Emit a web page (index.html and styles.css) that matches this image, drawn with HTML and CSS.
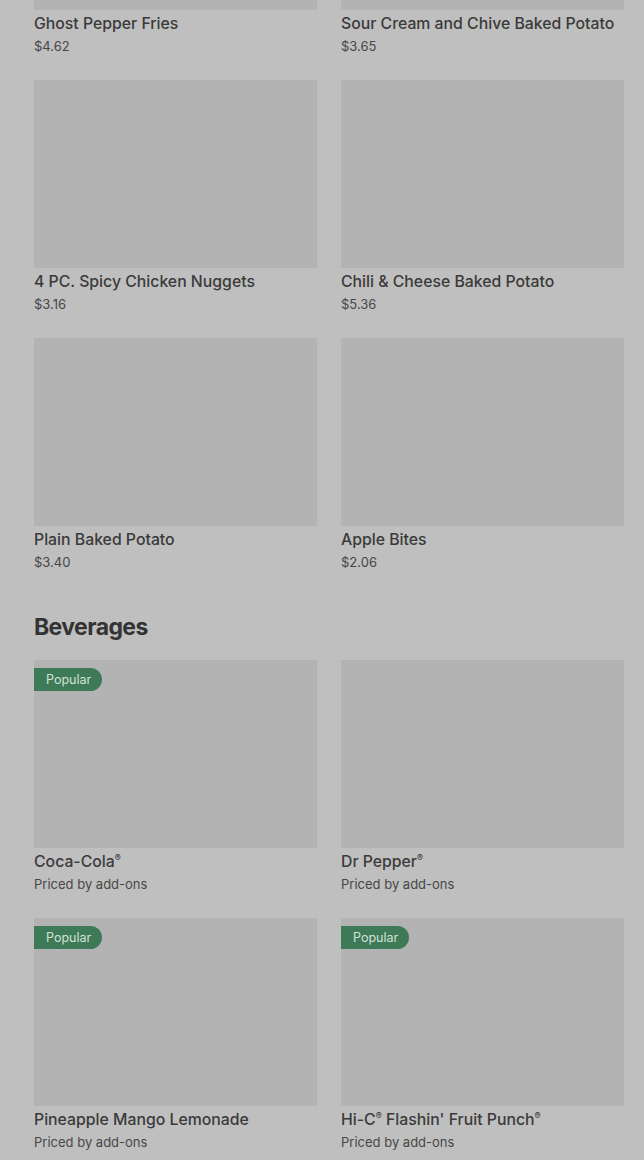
FILE: index.html
```html
<html>
<head>
<link rel="stylesheet" href="styles.css">
</head>
<body>
<div class="menu">
  <div class="grid first">
    <div class="item">
      <div class="photo"></div>
      <div class="name">Ghost Pepper Fries</div>
      <div class="price">$4.62</div>
    </div>
    <div class="item">
      <div class="photo"></div>
      <div class="name">Sour Cream and Chive Baked Potato</div>
      <div class="price">$3.65</div>
    </div>
    <div class="item">
      <div class="photo"></div>
      <div class="name">4 PC. Spicy Chicken Nuggets</div>
      <div class="price">$3.16</div>
    </div>
    <div class="item">
      <div class="photo"></div>
      <div class="name">Chili &amp; Cheese Baked Potato</div>
      <div class="price">$5.36</div>
    </div>
    <div class="item">
      <div class="photo"></div>
      <div class="name">Plain Baked Potato</div>
      <div class="price">$3.40</div>
    </div>
    <div class="item">
      <div class="photo"></div>
      <div class="name">Apple Bites</div>
      <div class="price">$2.06</div>
    </div>
  </div>

  <h2 class="section-title">Beverages</h2>
  <div class="grid">
    <div class="item">
      <div class="photo"><span class="badge">Popular</span></div>
      <div class="name">Coca-Cola<sup>®</sup></div>
      <div class="price">Priced by add-ons</div>
    </div>
    <div class="item">
      <div class="photo"></div>
      <div class="name">Dr Pepper<sup>®</sup></div>
      <div class="price">Priced by add-ons</div>
    </div>
    <div class="item">
      <div class="photo"><span class="badge">Popular</span></div>
      <div class="name">Pineapple Mango Lemonade</div>
      <div class="price">Priced by add-ons</div>
    </div>
    <div class="item">
      <div class="photo"><span class="badge">Popular</span></div>
      <div class="name">Hi-C<sup>®</sup> Flashin' Fruit Punch<sup>®</sup></div>
      <div class="price">Priced by add-ons</div>
    </div>
  </div>
</div>
</body>
</html>
```

FILE: styles.css
```css
html, body {
  margin: 0;
  background-color: #bfbfbf;
  overflow: hidden;
  }
body {
  font-family: Inter, Roboto, "Liberation Sans", sans-serif;
  color: #3a3a3a;
  }
div.menu {
  padding: 0 20px 0 34px;
  }
div.grid {
  display: grid;
  grid-template-columns: 1fr 1fr;
  column-gap: 24px;
  row-gap: 24px;
  }
div.grid.first {
  margin-top: -178px;
  }
div.item {
  display: flex;
  flex-direction: column;
  }
div.photo {
  position: relative;
  height: 188px;
  background-color: #b3b3b3;
  }
div.name {
  margin-top: 4px;
  font-size: 15.8px;
  font-weight: 500;
  line-height: 20px;
  white-space: nowrap;
  }
div.name sup {
  font-size: 9px;
  line-height: 0;
  vertical-align: 6px;
  }
div.price {
  margin-top: 2px;
  font-size: 13px;
  line-height: 20px;
  color: #474747;
  }
h2.section-title {
  margin: 39px 0 17px 0;
  font-size: 23px;
  font-weight: 700;
  line-height: 32px;
  letter-spacing: -0.6px;
  color: #333;
  }
span.badge {
  position: absolute;
  top: 8px;
  left: 0;
  height: 23px;
  line-height: 23px;
  padding: 0 11px 0 12px;
  font-size: 12.5px;
  color: #d2e2d8;
  background-color: #3f7a58;
  border-radius: 0 12px 12px 0;
  }
```
